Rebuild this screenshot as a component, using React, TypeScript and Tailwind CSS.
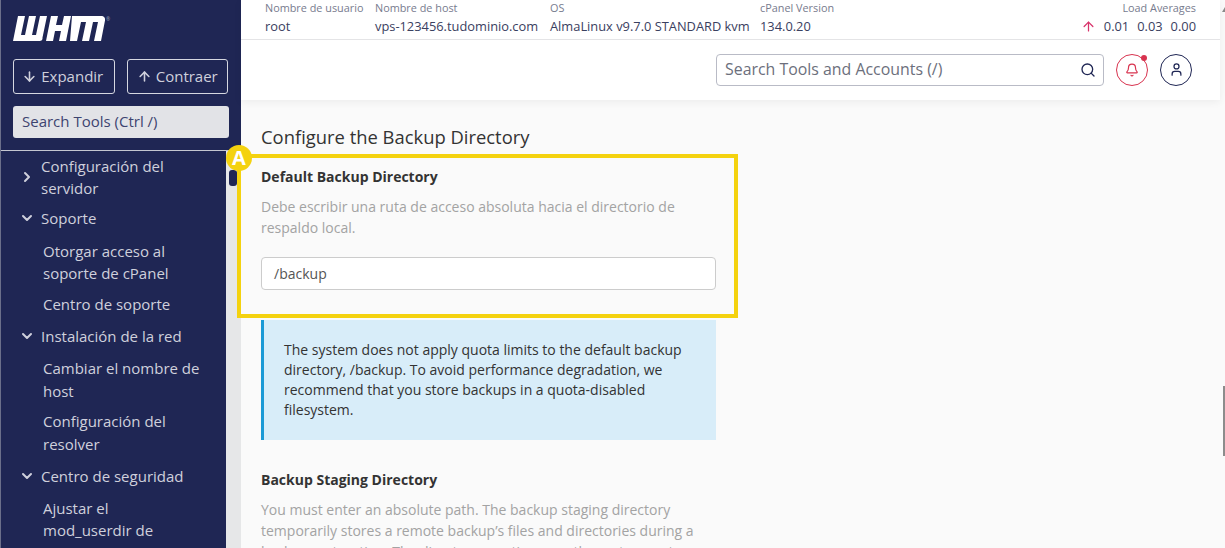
import React from "react";
import { ArrowDown, ArrowUp, ChevronRight, ChevronDown, Search, Bell, User } from "lucide-react";

const Head = ({ open, children }: { open?: boolean; children: React.ReactNode }) => (
  <div className="flex pl-[21px] pr-3">
    <div className="w-[20px] shrink-0 flex items-center">
      {open ? <ChevronDown size={16} strokeWidth={3} className="-ml-[2px]" /> : <ChevronRight size={16} strokeWidth={3} className="-ml-[2px]" />}
    </div>
    <div className="text-[15px] leading-[22px]">{children}</div>
  </div>
);
const Item = ({ children }: { children: React.ReactNode }) => (
  <div className="pl-[43px] pr-[26px] text-[15px] leading-[22.5px]">{children}</div>
);

const Stat = ({ w, label, value }: { w: string; label: string; value: string }) => (
  <div className={w}>
    <div className="text-[10.85px] leading-[15px] text-[#777b8e]">{label}</div>
    <div className="text-[12.85px] leading-[20px] mt-[1px] text-[#3a4060]">{value}</div>
  </div>
);

export default function App() {
  return (
    <div className="relative flex h-[548px] w-[1225px] overflow-hidden bg-[#fafafa] font-['Open_Sans','Noto_Sans',sans-serif]">
      <aside className="w-[241px] shrink-0 flex flex-col">
        <div className="bg-[#1f2654] h-[151px] border-b border-[#c4c6d0] flex flex-col px-[13px] pt-[16px]">
          <div className="h-[26px] flex items-start">
            <svg width="93" height="26" viewBox="0 0 93 26" fill="#fff">
              <path d="M5 0h7L8 19h4l4-19h7l-4 19h4l4-19h7l-4.500 21.500C29.800 24 28.500 25 26.500 25H0z" />
              <path d="M38 0h7l-2 9h6l2-9h7l-5 25h-7l2-10h-6l-2 10h-7z" />
              <path d="M59 0h29c3 0 4.500 2 4 4.500L88 25h-7l4-19h-5l-4 19h-7l4-19h-5l-4 19h-7z" />
            </svg>
            <span className="text-[5px] leading-[6px] text-[#9ea1b8]">®</span>
          </div>
          <div className="flex gap-[12px] mt-[17px]">
            <button className="w-[102px] h-[35px] rounded-[3px] border border-[#d5d7e0] text-[#cfd0dc] flex items-center justify-center gap-[4px] pr-[2px] text-[15px]">
              <ArrowDown size={15} strokeWidth={2.500} />Expandir
            </button>
            <button className="w-[102px] h-[35px] rounded-[3px] border border-[#d5d7e0] text-[#cfd0dc] flex items-center justify-center gap-[4px] text-[15px]">
              <ArrowUp size={15} strokeWidth={2.500} />Contraer
            </button>
          </div>
          <div className="mt-[12px] h-[32px] w-[216px] rounded-[3px] bg-[#e2e3e7] px-[9px] pb-[2px] flex items-center text-[15px] text-[#3d4470]">Search Tools (Ctrl /)</div>
        </div>
        <div className="flex flex-1 min-h-0">
          <nav className="w-[226px] bg-[#1f2654] text-[#cfd0dc] overflow-hidden pt-[4px]">
            <Head>Configuración del servidor</Head>
            <div className="h-[8px]" />
            <Head open>Soporte</Head>
            <div className="h-[10.500px]" />
            <Item>Otorgar acceso al soporte de cPanel</Item>
            <div className="h-[8.500px]" />
            <Item>Centro de soporte</Item>
            <div className="h-[9.500px]" />
            <Head open>Instalación de la red</Head>
            <div className="h-[10px]" />
            <Item>Cambiar el nombre de host</Item>
            <div className="h-[8px]" />
            <Item>Configuración del resolver</Item>
            <div className="h-[9.500px]" />
            <Head open>Centro de seguridad</Head>
            <div className="h-[10.400px]" />
            <Item>
              Ajustar el mod_userdir de
            </Item>
          </nav>
          <div className="w-[15px] bg-[#e6e7e8] relative">
            <div className="absolute left-[3px] top-[19px] h-[16px] w-[8px] rounded-[3px] bg-[#1f2654]" />
          </div>
        </div>
      </aside>

      <div className="flex-1 min-w-0 flex flex-col">
        <header className="bg-white w-[979px] shadow-[0_2px_8px_rgba(0,0,0,0.06)] z-10">
          <div className="h-[40px] border-b border-[#e4e4e6] flex pl-[24px] pr-[24px]">
            <Stat w="w-[110px]" label="Nombre de usuario" value="root" />
            <Stat w="w-[175px]" label="Nombre de host" value="vps-123456.tudominio.com" />
            <Stat w="w-[210px]" label="OS" value="AlmaLinux v9.7.0 STANDARD kvm" />
            <Stat w="w-[200px]" label="cPanel Version" value="134.0.20" />
            <div className="flex-1 text-right">
              <div className="text-[10.85px] leading-[15px] text-[#777b8e]">Load Averages</div>
              <div className="text-[12.85px] leading-[20px] mt-[1px] text-[#3a4060] flex justify-end items-center">
                <ArrowUp size={15} className="text-[#d8336b] mr-[8px]" />
                <span>0.01</span><span className="ml-[8px]">0.03</span><span className="ml-[8px]">0.00</span>
              </div>
            </div>
          </div>
          <div className="h-[60px] flex items-center justify-end pr-[28px] pb-[1px]">
            <div className="w-[388px] h-[32px] rounded-[4px] border border-[#b9bbc6] flex items-center justify-between pl-[8px] pr-[7px] text-[15.900px] text-[#6c6f7c]">
              <span className="pt-[1px]">Search Tools and Accounts (/)</span>
              <Search size={16} strokeWidth={2} className="text-[#1f2654]" />
            </div>
            <div className="relative ml-[12px] w-[32px] h-[32px] rounded-full border border-[#d8334f] flex items-center justify-center">
              <Bell size={14} className="text-[#d8334f]" />
              <span className="absolute right-[0px] top-[0px] w-[6px] h-[6px] rounded-full bg-[#d8334f]" />
            </div>
            <div className="ml-[12px] w-[32px] h-[32px] rounded-full border border-[#1f2654] flex items-center justify-center">
              <User size={15} className="text-[#1f2654]" />
            </div>
          </div>
        </header>

        <main className="pl-[20px] pt-[25px] w-[475px]">
          <h2 className="text-[18.400px] leading-[23px] text-[#333] font-normal">Configure the Backup Directory</h2>
          <div className="mt-[19px]">
            <div className="text-[14px] font-bold leading-[20px] text-[#333]">Default Backup Directory</div>
            <p className="mt-[9px] text-[14px] leading-[21px] text-[#a3a3a3]">Debe escribir una ruta de acceso absoluta hacia el directorio de respaldo local.</p>
            <div className="mt-[19px] h-[33px] rounded-[4px] border border-[#cccccc] bg-white px-[12px] flex items-center text-[14px] text-[#555]">/backup</div>
          </div>
          <div className="mt-[30px] h-[120px] bg-[#d8edf9] border-l-[3px] border-[#1b9ad6] pl-[20px] pr-[16px] pt-[20px] text-[14px] leading-[20px] text-[#333]">
            The system does not apply quota limits to the default backup directory, /backup. To avoid performance degradation, we recommend that you store backups in a quota-disabled filesystem.
          </div>
          <div className="mt-[30px] text-[14px] font-bold leading-[20px] text-[#333]">Backup Staging Directory</div>
          <p className="mt-[9px] text-[14px] leading-[21px] text-[#a3a3a3]">You must enter an absolute path. The backup staging directory temporarily stores a remote backup’s files and directories during a backup restoration. The directory empties once the system restores</p>
        </main>
      </div>

      <div className="absolute left-[237px] top-[154px] w-[501px] h-[164px] border-[4px] border-[#f4d20f]" />
      <div className="absolute left-[226px] top-[145px] w-[26px] h-[26px] rounded-full bg-[#f4d20f] text-white text-[20px] font-bold flex items-center justify-center">A</div>
      <div className="absolute left-0 top-0 bottom-0 w-[1px] bg-[#6b6f8a]" />
      <div className="absolute right-0 top-[386px] w-[2px] h-[70px] bg-[#8c8c8c]" />
      <svg className="absolute right-0 top-[7px]" width="3" height="5" viewBox="0 0 3 5" fill="#8c8c8c"><path d="M3 0v5H0z" /></svg>
    </div>
  );
}
